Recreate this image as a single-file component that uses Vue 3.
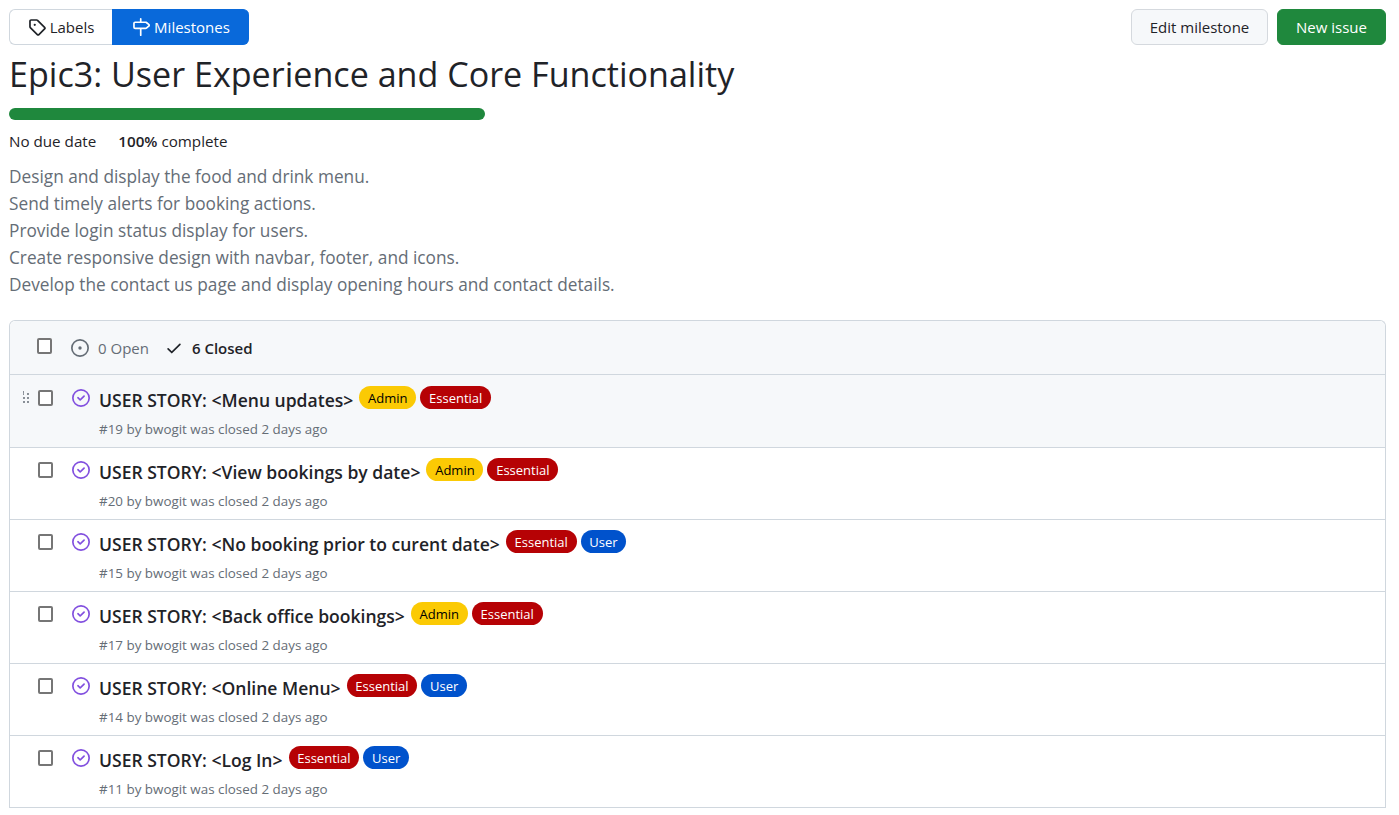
<script setup>
const description = [
  'Design and display the food and drink menu.',
  'Send timely alerts for booking actions.',
  'Provide login status display for users.',
  'Create responsive design with navbar, footer, and icons.',
  'Develop the contact us page and display opening hours and contact details.'
]

const issues = [
  { id: 19, title: 'USER STORY: <Menu updates>', labels: ['Admin', 'Essential'], hover: true },
  { id: 20, title: 'USER STORY: <View bookings by date>', labels: ['Admin', 'Essential'] },
  { id: 15, title: 'USER STORY: <No booking prior to curent date>', labels: ['Essential', 'User'] },
  { id: 17, title: 'USER STORY: <Back office bookings>', labels: ['Admin', 'Essential'] },
  { id: 14, title: 'USER STORY: <Online Menu>', labels: ['Essential', 'User'] },
  { id: 11, title: 'USER STORY: <Log In>', labels: ['Essential', 'User'] }
]
</script>

<template>
  <div class="page">
    <!-- top bar -->
    <div class="topbar">
      <div class="tabs">
        <a class="tab">
          <svg class="icon" viewBox="0 0 16 16"><path d="M1 7.775V2.75C1 1.784 1.784 1 2.75 1h5.025c.464 0 .91.184 1.238.513l6.25 6.25a1.75 1.75 0 0 1 0 2.474l-5.026 5.026a1.75 1.75 0 0 1-2.474 0l-6.25-6.25A1.752 1.752 0 0 1 1 7.775Zm1.5 0c0 .066.026.13.073.177l6.25 6.25a.25.25 0 0 0 .354 0l5.025-5.025a.25.25 0 0 0 0-.354l-6.25-6.25a.25.25 0 0 0-.177-.073H2.75a.25.25 0 0 0-.25.25ZM6 5a1 1 0 1 1 0 2 1 1 0 0 1 0-2Z" /></svg>
          Labels
        </a>
        <a class="tab selected">
          <svg class="icon" viewBox="0 0 16 16"><path d="M7.75 0a.75.75 0 0 1 .75.75V3h3.634c.414 0 .814.147 1.13.414l2.07 1.75a1.75 1.75 0 0 1 0 2.672l-2.07 1.75a1.75 1.75 0 0 1-1.13.414H8.5v5.25a.75.75 0 0 1-1.5 0V10H2.75A1.75 1.75 0 0 1 1 8.25v-3.5C1 3.784 1.784 3 2.75 3H7V.75A.75.75 0 0 1 7.75 0Zm4.384 8.5a.25.25 0 0 0 .161-.06l2.07-1.75a.248.248 0 0 0 0-.38l-2.07-1.75a.25.25 0 0 0-.161-.06H2.75a.25.25 0 0 0-.25.25v3.5c0 .138.112.25.25.25h9.384Z" /></svg>
          Milestones
        </a>
      </div>
      <div class="actions">
        <button class="btn">Edit milestone</button>
        <button class="btn primary">New issue</button>
      </div>
    </div>

    <!-- milestone -->
    <h1 class="title">Epic3: User Experience and Core Functionality</h1>
    <div class="progress"></div>
    <div class="meta">
      <span>No due date</span>
      <span><strong>100%</strong> complete</span>
    </div>
    <div class="description">
      <p v-for="line in description" :key="line">{{ line }}</p>
    </div>

    <!-- issues -->
    <div class="box">
      <div class="box-header">
        <input type="checkbox" class="check" />
        <svg class="icon open-icon" viewBox="0 0 16 16"><path d="M8 9.5a1.5 1.5 0 1 0 0-3 1.5 1.5 0 0 0 0 3Z" /><path d="M8 0a8 8 0 1 1 0 16A8 8 0 0 1 8 0ZM1.5 8a6.5 6.5 0 1 0 13 0 6.5 6.5 0 0 0-13 0Z" /></svg>
        <span class="open-count">0 Open</span>
        <svg class="icon check-icon" viewBox="0 0 16 16"><path d="M13.78 4.22a.75.75 0 0 1 0 1.06l-7.25 7.25a.75.75 0 0 1-1.06 0L2.22 9.28a.751.751 0 0 1 .018-1.042.751.751 0 0 1 1.042-.018L6 10.94l6.72-6.72a.75.75 0 0 1 1.06 0Z" /></svg>
        <span class="closed-count">6 Closed</span>
      </div>

      <div v-for="issue in issues" :key="issue.id" class="row" :class="{ hover: issue.hover }">
        <svg v-if="issue.hover" class="grabber" viewBox="0 0 16 16"><path d="M10 13a1 1 0 1 1 0-2 1 1 0 0 1 0 2Zm-4 0a1 1 0 1 1 0-2 1 1 0 0 1 0 2Zm1-5a1 1 0 1 1-2 0 1 1 0 0 1 2 0Zm3 1a1 1 0 1 1 0-2 1 1 0 0 1 0 2Zm1-5a1 1 0 1 1-2 0 1 1 0 0 1 2 0ZM6 5a1 1 0 1 1 0-2 1 1 0 0 1 0-2Z" /></svg>
        <input type="checkbox" class="check row-check" />
        <svg class="icon closed-icon" viewBox="0 0 16 16"><path d="M11.28 6.78a.75.75 0 0 0-1.06-1.06L7.25 8.69 5.78 7.22a.75.75 0 0 0-1.06 1.06l2 2a.75.75 0 0 0 1.06 0l3.5-3.5Z" /><path d="M16 8A8 8 0 1 1 0 8a8 8 0 0 1 16 0Zm-1.5 0a6.5 6.5 0 1 0-13 0 6.5 6.5 0 0 0 13 0Z" /></svg>
        <div class="row-body">
          <div class="row-title">
            <h3 class="issue-title">{{ issue.title }}</h3>
            <span v-for="label in issue.labels" :key="label" class="label" :class="label.toLowerCase()">{{ label }}</span>
          </div>
          <div class="issue-meta">#{{ issue.id }} by bwogit was closed 2 days ago</div>
        </div>
      </div>
    </div>
  </div>
</template>

<style>
body {
  background: #fff;
}
</style>

<style scoped>
.page {
  padding: 9px 13px 0 9px;
  font-family: "Open Sans", "Noto Sans", sans-serif;
  color: #1f2328;
  font-size: 15px;
}

.icon {
  width: 18px;
  height: 18px;
  fill: currentColor;
  flex: none;
}

.topbar {
  display: flex;
  justify-content: space-between;
  height: 36px;
}

.tabs {
  display: flex;
}

.tab {
  display: flex;
  align-items: center;
  justify-content: center;
  gap: 4px;
  width: 103px;
  border: 1px solid #d0d7de;
  border-right: 0;
  border-radius: 6px 0 0 6px;
  font-size: 15px;
  box-sizing: border-box;
}

.tab.selected {
  width: 137px;
  background: #0969da;
  border-color: #0969da;
  border-radius: 0 6px 6px 0;
  color: #fff;
}

.actions {
  display: flex;
  gap: 9px;
}

.btn {
  height: 36px;
  padding: 0;
  width: 137px;
  border: 1px solid #d5d9de;
  border-radius: 6px;
  background: #f6f8fa;
  color: #1f2328;
  font-family: inherit;
  font-size: 15px;
}

.btn.primary {
  width: 109px;
  background: #1f883d;
  border-color: #1f883d;
  color: #fff;
}

.title {
  margin: 7px 0 0;
  font-size: 34.1px;
  font-weight: 400;
  line-height: 45px;
}

.progress {
  width: 476px;
  height: 12px;
  margin-top: 11px;
  border-radius: 6px;
  background: #1f883d;
}

.meta {
  display: flex;
  gap: 22px;
  margin-top: 10px;
  font-size: 15.2px;
  line-height: 22px;
}

.meta strong {
  font-weight: 600;
}

.description {
  margin-top: 11px;
  color: #656d76;
  font-size: 17.25px;
  line-height: 27px;
}

.description p {
  margin: 0;
}

.box {
  margin-top: 22px;
  border: 1px solid #d0d7de;
  border-bottom: 0;
  border-radius: 6px 6px 0 0;
}

.box-header {
  display: flex;
  align-items: center;
  height: 53px;
  padding-left: 27px;
  background: #f6f8fa;
  border-bottom: 1px solid #d0d7de;
  border-radius: 6px 6px 0 0;
}

.check {
  appearance: none;
  width: 15px;
  height: 16px;
  margin: 0;
  flex: none;
  box-sizing: border-box;
  border: 2px solid #767676;
  border-radius: 2px;
  background: #fff;
}

.box-header .check {
  margin-top: -4px;
}

.open-icon {
  margin-left: 19px;
  color: #656d76;
}

.open-count {
  margin-left: 9px;
  color: #656d76;
}

.check-icon {
  margin-left: 16px;
}

.closed-count {
  margin-left: 9px;
  font-weight: 600;
}

.row {
  position: relative;
  display: flex;
  align-items: flex-start;
  padding: 10px 0 9px 28px;
  border-bottom: 1px solid #d0d7de;
}

.row.hover {
  padding-top: 11px;
  background: #f6f8fa;
}

.grabber {
  position: absolute;
  left: 8px;
  top: 15px;
  width: 16px;
  height: 16px;
  fill: #656d76;
}

.row-check {
  margin-top: 4px;
}

.closed-icon {
  margin: 3px 0 0 19px;
  color: #8250df;
}

.row-body {
  margin-left: 9px;
}

.row-title {
  display: flex;
  align-items: flex-start;
  gap: 4px;
}

.issue-title {
  margin: 1px 2px 7px 0;
  font-size: 17.55px;
  font-weight: 600;
  line-height: 26px;
}

.label {
  height: 23px;
  padding: 0 8.75px;
  border-radius: 12px;
  font-size: 13px;
  line-height: 24px;
  box-sizing: border-box;
}

.label.admin {
  background: #fbca04;
  color: #000;
}

.label.essential {
  background: #b60205;
  color: #fff;
}

.label.user {
  background: #0052cc;
  color: #fff;
}

.issue-meta {
  color: #656d76;
  font-size: 13.4px;
  line-height: 18px;
}
</style>
